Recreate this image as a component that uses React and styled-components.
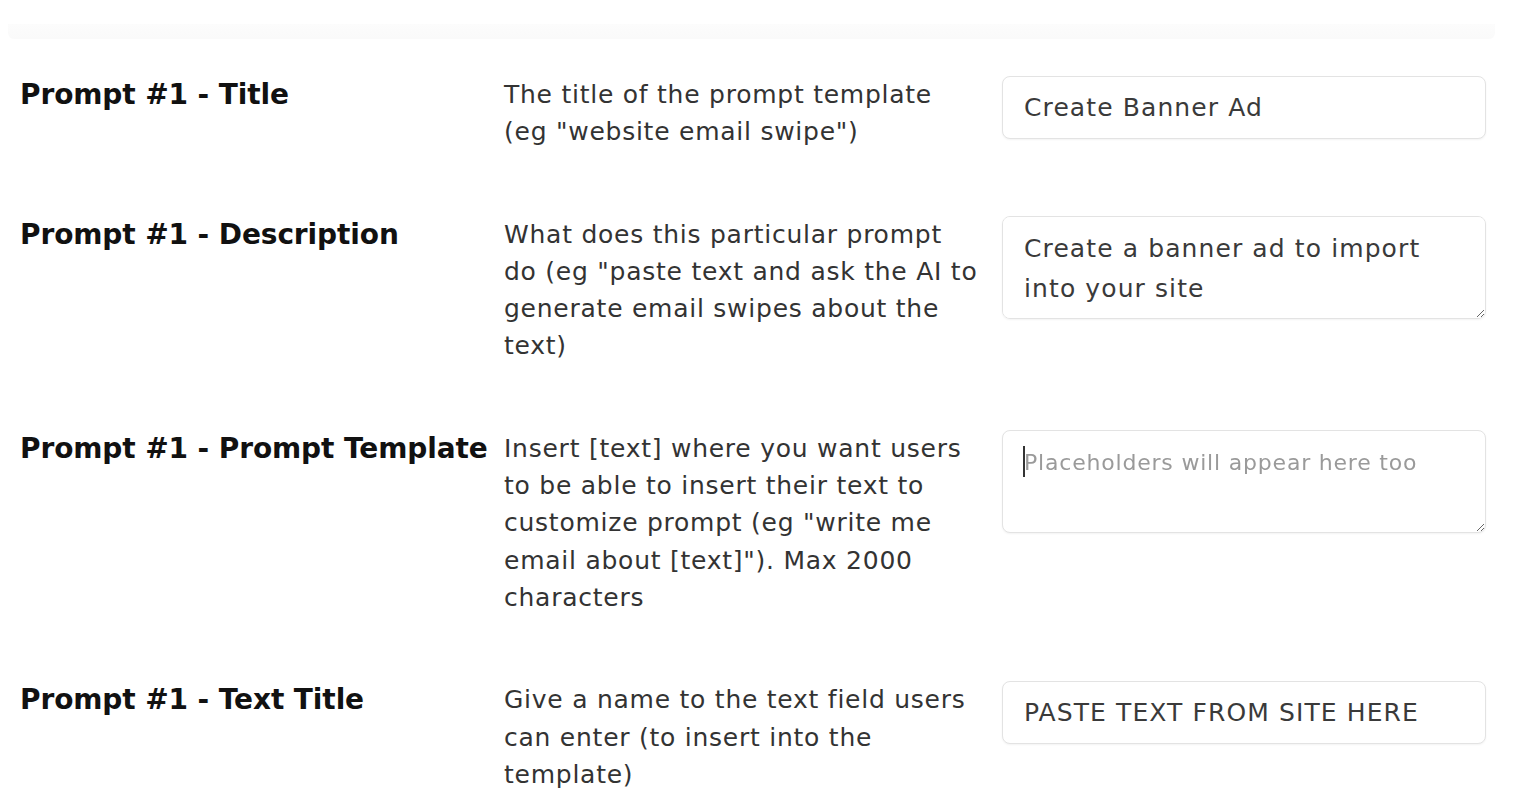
import React from 'react'
import styled, { createGlobalStyle } from 'styled-components'

const GlobalStyle = createGlobalStyle`
    html, body {
        margin: 0;
        padding: 0;
        background: #ffffff;
    }
    body {
        font-family: "DejaVu Sans", "Liberation Sans", sans-serif;
        color: #222;
    }
`

const fields = [
    {
        label: 'Prompt #1 - Title',
        help: 'The title of the prompt template (eg "website email swipe")',
        kind: 'input',
        value: 'Create Banner Ad',
    },
    {
        label: 'Prompt #1 - Description',
        help: 'What does this particular prompt do (eg "paste text and ask the AI to generate email swipes about the text)',
        kind: 'textarea',
        value: 'Create a banner ad to import into your site',
    },
    {
        label: 'Prompt #1 - Prompt Template',
        help: 'Insert [text] where you want users to be able to insert their text to customize prompt (eg "write me email about [text]"). Max 2000 characters',
        kind: 'textarea',
        placeholder: 'Placeholders will appear here too',
        caret: true,
    },
    {
        label: 'Prompt #1 - Text Title',
        help: 'Give a name to the text field users can enter (to insert into the template)',
        kind: 'input',
        value: 'PASTE TEXT FROM SITE HERE',
    },
]

export default function App() {
    return (
        <Page>
            <GlobalStyle />
            <CardEdge />
            <Form>
                {fields.map((f) => (
                    <Row key={f.label}>
                        <Label>{f.label}</Label>
                        <Help>{f.help}</Help>
                        <Control>
                            {f.kind === 'input' ? (
                                <TextInput defaultValue={f.value} />
                            ) : (
                                <TextArea
                                    defaultValue={f.value}
                                    placeholder={f.placeholder}
                                    rows={2}
                                />
                            )}
                            {f.caret && <Caret />}
                        </Control>
                    </Row>
                ))}
            </Form>
        </Page>
    )
}

const Page = styled.div`
    width: 1536px;
    min-height: 809px;
    padding-top: 24px;
    box-sizing: border-box;
    overflow: hidden;
`

const CardEdge = styled.div`
    height: 15px;
    margin: 0 41px 0 8px;
    background: linear-gradient(#fcfcfc, #fafafa);
    border-radius: 0 0 6px 6px;
`

const Form = styled.div`
    display: flex;
    flex-direction: column;
    gap: 65px;
    padding: 37px 0 0 20px;
`

const Row = styled.div`
    display: grid;
    grid-template-columns: 484px 498px 484px;
    align-items: start;
`

const Label = styled.div`
    font-size: 28px;
    font-weight: 700;
    line-height: 37px;
    color: #111;
    white-space: nowrap;
    letter-spacing: -0.1px;
`

const Help = styled.div`
    font-size: 25px;
    line-height: 37.3px;
    color: #333;
    max-width: 478px;
    letter-spacing: 0.75px;
`

const Control = styled.div`
    position: relative;
`

const fieldBase = `
    display: block;
    width: 100%;
    box-sizing: border-box;
    border: 1px solid #e3e3e3;
    border-radius: 8px;
    background: #fff;
    box-shadow: 0 1px 2px rgba(0, 0, 0, 0.05);
    font-family: "DejaVu Sans", "Liberation Sans", sans-serif;
    color: #3a3a3a;
    outline: none;
    margin: 0;
`

const TextInput = styled.input`
    ${fieldBase}
    height: 63px;
    padding: 0 21px;
    font-size: 25px;
    letter-spacing: 1.1px;
`

const TextArea = styled.textarea`
    ${fieldBase}
    height: 103px;
    padding: 12px 21px;
    font-size: 25px;
    line-height: 40px;
    resize: vertical;
    letter-spacing: 1.1px;

    &::placeholder {
        color: #9a9a9a;
        font-size: 22px;
        letter-spacing: 0.8px;
    }
`

const Caret = styled.span`
    position: absolute;
    left: 21px;
    top: 16px;
    width: 2px;
    height: 31px;
    background: #333;
`
